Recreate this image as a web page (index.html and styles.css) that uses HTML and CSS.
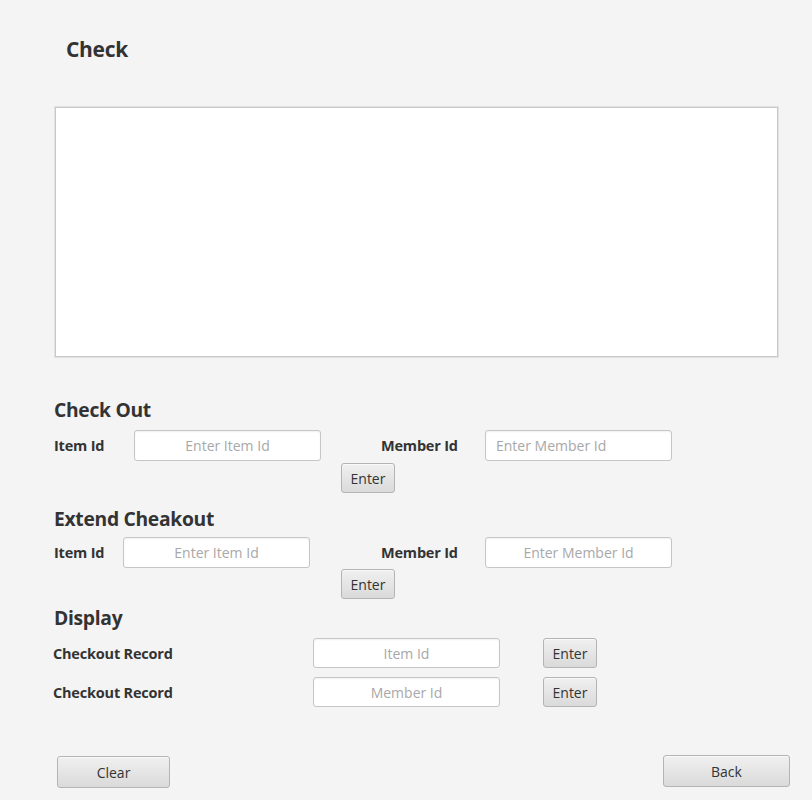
FILE: index.html
```html
<!DOCTYPE html>
<html>
<head>
<meta charset="utf-8">
<link rel="stylesheet" href="styles.css">
</head>
<body>
<div class="page">
  <h1 class="title">Check</h1>
  <div class="output"></div>

  <h2 class="heading h-checkout">Check Out</h2>
  <div class="row row-a">
    <span class="label lbl-item">Item Id</span>
    <div class="field center">Enter Item Id</div>
    <span class="label lbl-member">Member Id</span>
    <div class="field">Enter Member Id</div>
  </div>
  <div class="btn-row btn-row-a"><button class="btn btn-small">Enter</button></div>

  <h2 class="heading h-extend">Extend Cheakout</h2>
  <div class="row row-b">
    <span class="label lbl-item2">Item Id</span>
    <div class="field center">Enter Item Id</div>
    <span class="label lbl-member2">Member Id</span>
    <div class="field center">Enter Member Id</div>
  </div>
  <div class="btn-row btn-row-b"><button class="btn btn-small">Enter</button></div>

  <h2 class="heading h-display">Display</h2>
  <div class="row row-c">
    <span class="label lbl-record">Checkout Record</span>
    <div class="field center">Item Id</div>
    <button class="btn btn-small btn-side">Enter</button>
  </div>
  <div class="row row-d">
    <span class="label lbl-record">Checkout Record</span>
    <div class="field center">Member Id</div>
    <button class="btn btn-small btn-side">Enter</button>
  </div>

  <div class="footer">
    <button class="btn btn-clear">Clear</button>
    <button class="btn btn-back">Back</button>
  </div>
</div>
</body>
</html>
```

FILE: styles.css
```css
html, body {
  margin: 0;
  padding: 0;
  background: #f4f4f4;
}
body {
  font-family: "Open Sans", "Noto Sans", sans-serif;
  color: #333333;
  width: 812px;
  height: 800px;
  overflow: hidden;
}
.page {
  display: flow-root;
}
.title {
  margin: 35px 0 0 66px;
  font-size: 21px;
  line-height: 28px;
  font-weight: 700;
  height: 28px;
  letter-spacing: -0.3px;
}
.output {
  margin: 44px 0 0 55px;
  width: 721px;
  height: 248px;
  background: #ffffff;
  border: 1px solid #c8c8c8;
  box-shadow: 0 0 0 1px #e2e2e2;
}
.heading {
  margin: 0 0 0 54px;
  font-size: 19.3px;
  line-height: 24px;
  height: 24px;
  font-weight: 700;
  letter-spacing: -0.3px;
  white-space: nowrap;
}
.h-checkout { margin-top: 41px; }
.h-extend { margin-top: 14px; }
.h-display { margin-top: 7px; }

.row {
  display: flex;
  align-items: center;
  height: 31px;
}
.row-a { margin-top: 8px; padding-left: 54px; }
.row-b { margin-top: 6px; padding-left: 54px; }
.row-c { margin-top: 8px; padding-left: 53px; height: 30px; }
.row-d { margin-top: 9px; padding-left: 53px; height: 30px; }

.label {
  font-size: 14.5px;
  font-weight: 700;
  letter-spacing: -0.2px;
  white-space: nowrap;
}
.lbl-item { width: 80px; }
.lbl-member { width: 104px; margin-left: 60px; }
.lbl-item2 { width: 69px; }
.lbl-member2 { width: 104px; margin-left: 71px; }
.lbl-record { width: 260px; }

.field {
  box-sizing: border-box;
  width: 187px;
  height: 31px;
  background: #ffffff;
  border: 1px solid #c6c6c6;
  border-radius: 3px;
  box-shadow: inset 0 1px 2px rgba(0,0,0,0.06);
  font-size: 14px;
  line-height: 30px;
  color: #a8a8a8;
  padding: 0 10px;
  white-space: nowrap;
}
.row-c .field, .row-d .field { height: 30px; line-height: 29px; }
.field.center { text-align: center; }

.btn {
  box-sizing: border-box;
  font-family: "Open Sans", "Noto Sans", sans-serif;
  font-size: 14px;
  color: #333333;
  background: linear-gradient(#f0f0f0, #dadada);
  border: 1px solid #b4b4b4;
  border-radius: 3px;
  box-shadow: inset 0 1px 0 rgba(255,255,255,0.6);
  padding: 0;
  margin: 0;
  cursor: default;
}
.btn-row {
  padding-left: 341px;
  height: 30px;
}
.btn-row-a { margin-top: 2px; }
.btn-row-b { margin-top: 1px; }
.btn-small {
  width: 54px;
  height: 30px;
}
.btn-side { margin-left: 43px; }

.footer {
  display: flex;
  justify-content: space-between;
  margin-top: 48px;
  padding: 0 22px 0 57px;
}
.btn-clear {
  width: 113px;
  height: 32px;
  margin-top: 1px;
}
.btn-back {
  width: 127px;
  height: 32px;
}
```
